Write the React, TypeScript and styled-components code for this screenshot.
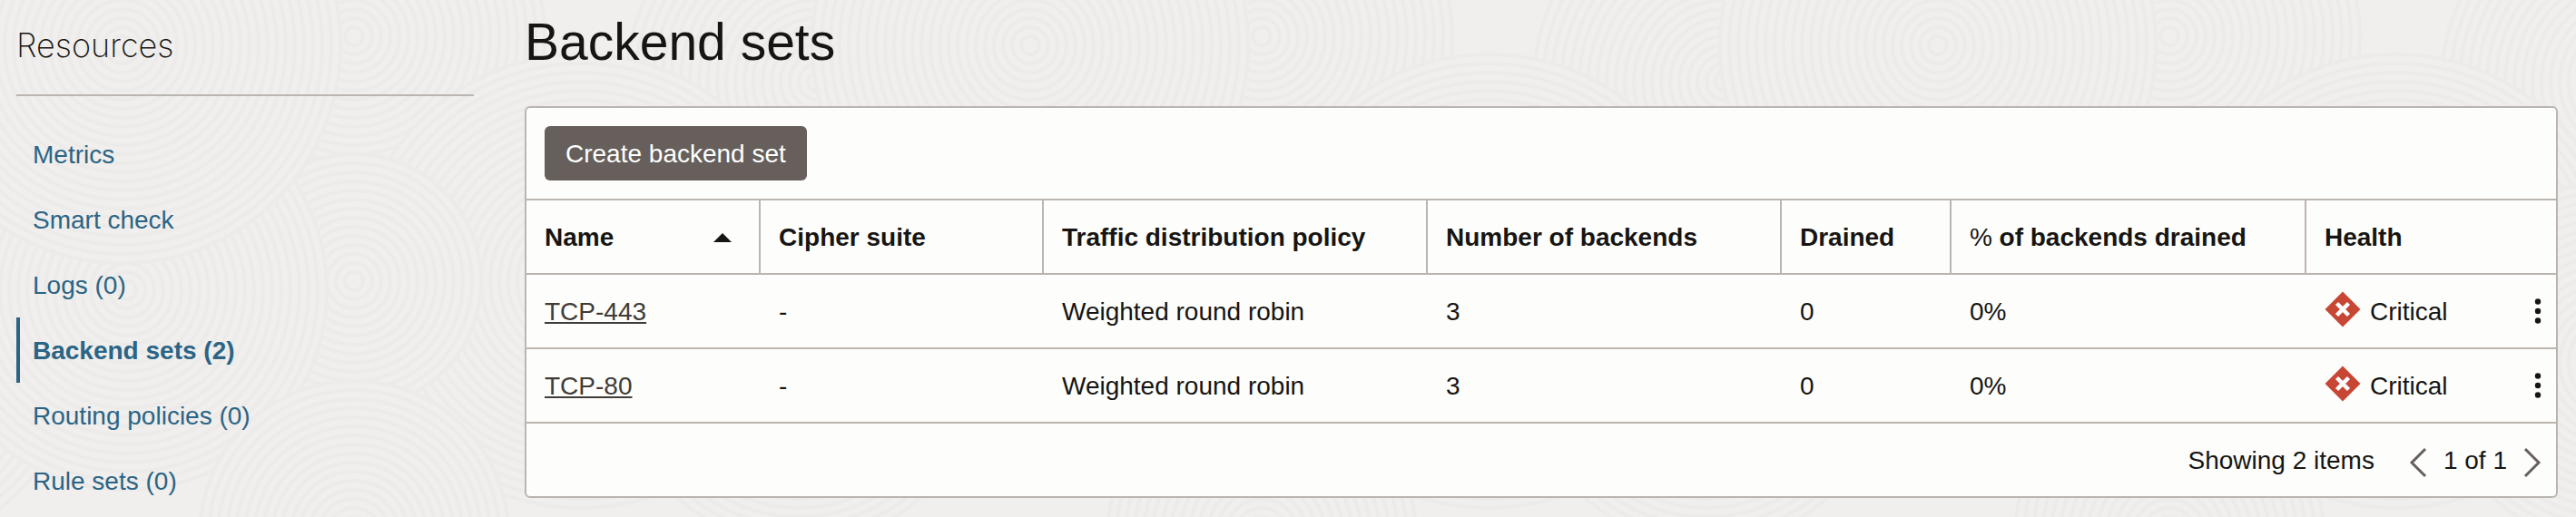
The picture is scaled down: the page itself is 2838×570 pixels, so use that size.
import React from "react";
import styled, { createGlobalStyle } from "styled-components";

const ink = "#161513";
const line = "#bbb5b0";
const link = "#2b6485";
const muted = "#665f5b";
const surface = "#fdfdfb";

const GlobalStyle = createGlobalStyle`
  *, *::before, *::after { box-sizing: border-box; }
  body {
    margin: 0;
    background: #f0efed;
    color: ${ink};
    font-family: "Helvetica Neue", "Liberation Sans", Arial, sans-serif;
    font-size: 28px;
    line-height: 36px;
  }
`;

const Page = styled.div`
  position: relative;
  display: flex;
  align-items: flex-start;
  gap: 56px;
  min-height: 100vh;
  padding: 0 20px 0 18px;
  overflow: hidden;
`;

const Texture = styled.svg`
  position: absolute;
  inset: 0;
  width: 100%;
  height: 100%;
  z-index: -1;
`;

const Sidebar = styled.aside`
  flex: 0 0 504px;
  padding-top: 26px;
`;

const SidebarTitle = styled.h2`
  margin: 0 0 28px;
  padding-bottom: 30px;
  border-bottom: 2px solid ${line};
  font-family: Inter, "Liberation Sans", sans-serif;
  font-size: 36px;
  font-weight: 200;
  line-height: 48px;
`;

const NavList = styled.ul`
  margin: 0;
  padding: 0;
  list-style: none;
`;

const NavLink = styled.a<{ $active?: boolean }>`
  display: flex;
  align-items: center;
  height: 72px;
  padding: 2px 0 0 14px;
  border-left: 4px solid ${(p) => (p.$active ? link : "transparent")};
  color: ${link};
  font-weight: ${(p) => (p.$active ? 700 : 400)};
  text-decoration: none;
`;

const Main = styled.main`
  flex: 1 1 0;
  min-width: 0;
  padding-top: 14px;
`;

const Title = styled.h1`
  margin: 0 0 39px;
  font-size: 57px;
  font-weight: 400;
  line-height: 64px;
`;

const Panel = styled.section`
  border: 2px solid ${line};
  border-radius: 6px;
  background: ${surface};
`;

const Toolbar = styled.div`
  display: flex;
  padding: 20px;
  border-bottom: 2px solid ${line};
`;

const PrimaryButton = styled.button`
  height: 60px;
  padding: 2px 23px 0;
  border: 0;
  border-radius: 6px;
  background: ${muted};
  color: #fff;
  font: inherit;
  cursor: pointer;
`;

const Table = styled.table`
  width: 100%;
  table-layout: fixed;
  border-collapse: separate;
  border-spacing: 0;
`;

const Column = styled.col<{ $width: string }>`
  width: ${(p) => p.$width};
`;

const HeaderCell = styled.th`
  height: 82px;
  padding: 2px 20px 0;
  border-right: 2px solid ${line};
  border-bottom: 2px solid ${line};
  font-weight: 700;
  text-align: left;
  white-space: nowrap;

  &:last-child { border-right: 0; }
`;

const SortButton = styled.button`
  display: flex;
  align-items: center;
  justify-content: space-between;
  width: 100%;
  padding: 0 10px 0 0;
  border: 0;
  background: none;
  color: inherit;
  font: inherit;
  cursor: pointer;
`;

const Regular = styled.span`
  font-weight: 400;
`;

const Cell = styled.td`
  height: 82px;
  padding: 2px 20px 0;
  border-bottom: 2px solid ${line};
  white-space: nowrap;
`;

const ActionCell = styled(Cell)`
  padding: 0;
`;

const NameLink = styled.a`
  color: #403c38;
  text-decoration: underline;
  text-decoration-thickness: 2px;
  text-underline-offset: 2px;
  text-decoration-skip-ink: none;
`;

const Status = styled.span`
  display: flex;
  align-items: center;
  gap: 10px;

  svg { margin-bottom: 6px; }
`;

const IconButton = styled.button<{ $width: number }>`
  display: flex;
  align-items: center;
  justify-content: center;
  width: ${(p) => p.$width}px;
  height: 40px;
  padding: 0;
  border: 0;
  background: none;
  color: ${(p) => p.color ?? ink};
  cursor: pointer;
`;

const Footer = styled.footer`
  display: flex;
  align-items: center;
  justify-content: flex-end;
  height: 80px;
  padding: 2px 10px 0 0;
`;

const Pager = styled.nav`
  display: flex;
  align-items: center;
  margin-left: 32px;

  svg { margin-top: 4px; }
`;

const PageCount = styled.span`
  padding: 0 12px;
`;

const navItems = [
  { label: "Metrics" },
  { label: "Smart check" },
  { label: "Logs (0)" },
  { label: "Backend sets (2)", active: true },
  { label: "Routing policies (0)" },
  { label: "Rule sets (0)" },
];

const columns = ["11.54%", "13.95%", "18.92%", "17.44%", "8.36%", "17.49%", "auto", "40px"];

const rows = [
  { name: "TCP-443", cipher: "-", policy: "Weighted round robin", backends: 3, drained: 0, percent: "0%", health: "Critical" },
  { name: "TCP-80", cipher: "-", policy: "Weighted round robin", backends: 3, drained: 0, percent: "0%", health: "Critical" },
];

// Overlapping ring clusters; later ones cover the earlier ones.
const clusters = [
  { x: 390, y: 40, r: 210 },
  { x: 900, y: 90, r: 210 },
  { x: 640, y: 310, r: 250 },
  { x: 390, y: 310, r: 140 },
  { x: 880, y: 400, r: 200 },
  { x: 140, y: 320, r: 220 },
  { x: 135, y: 50, r: 240 },
  { x: 390, y: 590, r: 170 },
];

function Rings({ x, y, r }: { x: number; y: number; r: number }) {
  const radii: number[] = [];
  for (let radius = r; radius > 4; radius -= 10) radii.push(radius);
  return (
    <g>
      {radii.map((radius) => (
        <circle key={radius} cx={x} cy={y} r={radius} fill="#f0efed" stroke="#ecebe9" strokeWidth="4" />
      ))}
    </g>
  );
}

function Backdrop() {
  return (
    <Texture aria-hidden="true">
      <defs>
        <pattern id="rings" width="1000" height="600" patternUnits="userSpaceOnUse">
          {clusters.map((c) => (
            <React.Fragment key={`${c.x}-${c.y}`}>
              <Rings {...c} />
              {c.x < c.r && <Rings {...c} x={c.x + 1000} />}
              {c.x + c.r > 1000 && <Rings {...c} x={c.x - 1000} />}
            </React.Fragment>
          ))}
        </pattern>
      </defs>
      <rect width="100%" height="100%" fill="url(#rings)" />
    </Texture>
  );
}

function CriticalIcon() {
  return (
    <svg width="40" height="40" viewBox="0 0 40 40" aria-hidden="true">
      <path d="M20 0.500 39.500 20 20 39.500 0.500 20Z" fill="#c74634" />
      <path d="M13.500 13.500 26.500 26.500M26.500 13.500 13.500 26.500" stroke="#fff" strokeWidth="4.500" />
    </svg>
  );
}

function KebabIcon() {
  return (
    <svg width="8" height="30" viewBox="0 0 8 30" fill="currentColor" aria-hidden="true">
      <circle cx="4" cy="4.500" r="3.200" />
      <circle cx="4" cy="15" r="3.200" />
      <circle cx="4" cy="25.500" r="3.200" />
    </svg>
  );
}

function Chevron({ d }: { d: string }) {
  return (
    <svg width="20" height="34" viewBox="0 0 20 34" fill="none" stroke="currentColor" strokeWidth="3" aria-hidden="true">
      <path d={d} />
    </svg>
  );
}

export default function App() {
  return (
    <>
      <GlobalStyle />
      <Page>
        <Backdrop />
        <Sidebar>
          <SidebarTitle>Resources</SidebarTitle>
          <nav aria-label="Resources">
            <NavList>
              {navItems.map((item) => (
                <li key={item.label}>
                  <NavLink href="#" $active={item.active} aria-current={item.active ? "page" : undefined}>
                    {item.label}
                  </NavLink>
                </li>
              ))}
            </NavList>
          </nav>
        </Sidebar>
        <Main>
          <Title>Backend sets</Title>
          <Panel aria-label="Backend sets">
            <Toolbar>
              <PrimaryButton type="button">Create backend set</PrimaryButton>
            </Toolbar>
            <Table>
              <colgroup>
                {columns.map((width, i) => (
                  <Column key={i} $width={width} />
                ))}
              </colgroup>
              <thead>
                <tr>
                  <HeaderCell scope="col" aria-sort="ascending">
                    <SortButton type="button">
                      Name
                      <svg width="20" height="10" viewBox="0 0 20 10" aria-hidden="true">
                        <path d="M10 0 20 10H0Z" fill={ink} />
                      </svg>
                    </SortButton>
                  </HeaderCell>
                  <HeaderCell scope="col">Cipher suite</HeaderCell>
                  <HeaderCell scope="col">Traffic distribution policy</HeaderCell>
                  <HeaderCell scope="col">Number of backends</HeaderCell>
                  <HeaderCell scope="col">Drained</HeaderCell>
                  <HeaderCell scope="col"><Regular>%</Regular> of backends drained</HeaderCell>
                  <HeaderCell scope="col" colSpan={2}>Health</HeaderCell>
                </tr>
              </thead>
              <tbody>
                {rows.map((row) => (
                  <tr key={row.name}>
                    <Cell><NameLink href="#">{row.name}</NameLink></Cell>
                    <Cell>{row.cipher}</Cell>
                    <Cell>{row.policy}</Cell>
                    <Cell>{row.backends}</Cell>
                    <Cell>{row.drained}</Cell>
                    <Cell>{row.percent}</Cell>
                    <Cell><Status><CriticalIcon />{row.health}</Status></Cell>
                    <ActionCell>
                      <IconButton type="button" $width={40} aria-label={`Actions for ${row.name}`}><KebabIcon /></IconButton>
                    </ActionCell>
                  </tr>
                ))}
              </tbody>
            </Table>
            <Footer>
              <span>Showing 2 items</span>
              <Pager aria-label="Pagination">
                <IconButton type="button" $width={32} color={muted} aria-label="Previous page"><Chevron d="M18 2 3 17 18 32" /></IconButton>
                <PageCount>1 of 1</PageCount>
                <IconButton type="button" $width={32} color={muted} aria-label="Next page"><Chevron d="M2 2 17 17 2 32" /></IconButton>
              </Pager>
            </Footer>
          </Panel>
        </Main>
      </Page>
    </>
  );
}
